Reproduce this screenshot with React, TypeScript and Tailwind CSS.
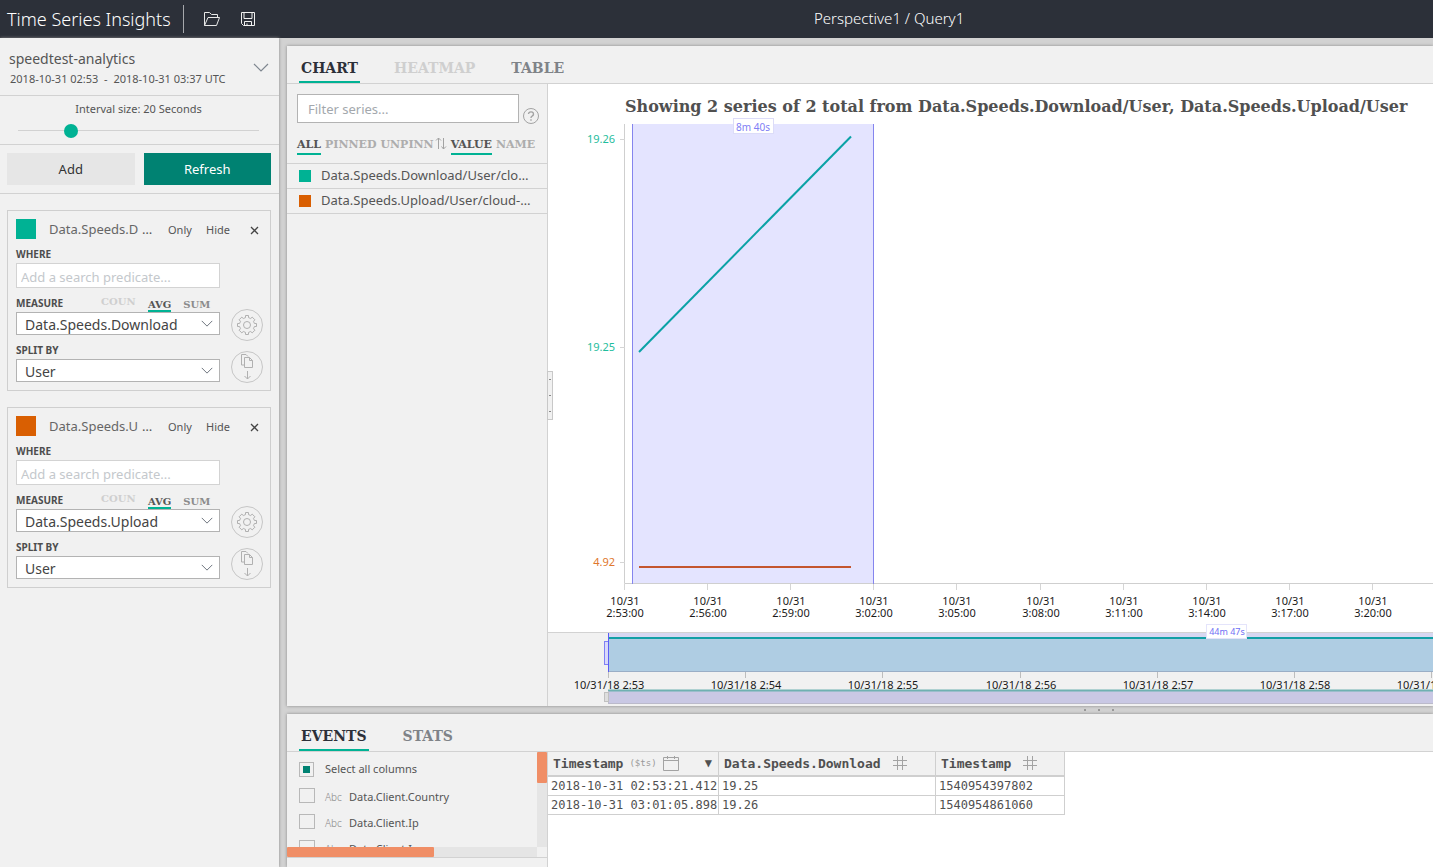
import React from "react";

const SANS = "font-['Noto_Sans',sans-serif]";
const SERIF = "font-['DejaVu_Serif',serif]";
const MONO = "font-['DejaVu_Sans_Mono',monospace]";

const yTicks = [
  { y: 15, label: "19.26", color: "#1fbd9d" },
  { y: 223, label: "19.25", color: "#1fbd9d" },
  { y: 438, label: "4.92", color: "#e0772d" },
];
const xTicks = ["2:53:00", "2:56:00", "2:59:00", "3:02:00", "3:05:00", "3:08:00", "3:11:00", "3:14:00", "3:17:00", "3:20:00"];
const brushTicks = ["2:53", "2:54", "2:55", "2:56", "2:57", "2:58", "2:59"];

function Chevron({ className }: { className: string }) {
  return (
    <svg className={className} viewBox="0 0 16 9" fill="none" stroke="currentColor" strokeWidth="1.2" aria-hidden="true">
      <path d="M1 1l7 7 7-7" />
    </svg>
  );
}

function Header() {
  return (
    <header className="flex h-[38px] shrink-0 items-center bg-[#2c3039] pb-px text-white">
      <h1 className="w-[176px] whitespace-nowrap pl-[7px] text-lg font-light">Time Series Insights</h1>
      <div className="ml-[7px] h-7 w-px bg-[#a6a8ac]" />
      <button aria-label="Open" className="ml-5">
        <svg width="17" height="16" viewBox="0 0 17 16" fill="none" stroke="#e8e8e8" aria-hidden="true">
          <path d="M.5 14.500V1.500H5.500L7.500 3.500H13.500V6.500M.5 14.500L4 6.500H15.500L12.500 14.500Z" />
        </svg>
      </button>
      <button aria-label="Save" className="ml-5">
        <svg width="15" height="16" viewBox="0 0 15 16" fill="none" stroke="#f1f1f1" aria-hidden="true">
          <path d="M.5 1.500H13.500V14.500H2.500L.5 12.500ZM3 1.500V7.500H11V1.500M3.500 14.500V10.500H10.500V14.500M6 14.500V12.500" />
        </svg>
      </button>
      <p className="ml-[558px] whitespace-nowrap text-[15px] font-light">Perspective1 / Query1</p>
    </header>
  );
}

function SelectBox({ id, value }: { id: string; value: string }) {
  return (
    <div className="relative h-[23px]">
      <select
        id={id}
        defaultValue={value}
        className="block h-full w-full appearance-none border border-[#b3b3b3] bg-white pl-2 pt-[2px] text-sm leading-5 text-[#444]"
      >
        <option>{value}</option>
      </select>
      <Chevron className="pointer-events-none absolute right-[7px] top-2 h-[7px] w-3 text-[#5f6670]" />
    </div>
  );
}

function GearIcon() {
  return (
    <svg width="20" height="20" viewBox="0 0 20 20" fill="none" stroke="#b0b0b0" aria-hidden="true">
      <path d="M8.500 2.600V.5H11.500V2.600L13.700 3.500L15.200 2.100L17.900 4.800L16.500 6.300L17.400 8.500H19.500V11.500H17.400L16.500 13.700L17.900 15.200L15.200 17.900L13.700 16.500L11.500 17.400V19.500H8.500V17.400L6.300 16.500L4.800 17.900L2.100 15.200L3.500 13.700L2.600 11.500H.5V8.500H2.600L3.500 6.300L2.100 4.800L4.800 2.100L6.300 3.500Z" />
      <circle cx="10" cy="10" r="3.500" />
    </svg>
  );
}

function CopyDownIcon() {
  return (
    <svg width="14" height="26" viewBox="0 0 14 26" fill="none" stroke="#b0b0b0" aria-hidden="true">
      <path d="M4.500 11H1.500V.5H6L8 2.500M4.500 3.500H9.500L12.500 6.500V13.500H4.500ZM9.500 3.500V6.500H12.500M7.500 17V25M4.500 22L7.500 25L10.500 22" />
    </svg>
  );
}

function TermCard({ id, title, color, measure }: { id: string; title: string; color: string; measure: string }) {
  const label = "flex h-6 items-end text-[10px] font-bold leading-[18px] text-[#4d4d4d]";
  return (
    <section className="border border-[#cfcfcf] p-2 pb-[7px] pr-[7px]">
      <div className="-mb-[2px] flex h-[22px] items-center text-[11px] text-[#555]">
        <span className={`h-5 w-5 self-start ${color}`} />
        <h2 className="ml-[13px] w-[93px] whitespace-pre text-[13px] text-[#666]">{title}</h2>
        <span className="w-[26px] text-[13px]">…</span>
        <button className="w-[38px] text-left">Only</button>
        <button className="w-11 text-left">Hide</button>
        <button aria-label="Remove">
          <svg width="9" height="9" viewBox="0 0 9 9" stroke="#444" strokeWidth="1.300" aria-hidden="true">
            <path d="M1 1l7 7M8 1l-7 7" />
          </svg>
        </button>
      </div>
      <div className="flex items-end justify-between">
        <div className="mb-px w-[204px]">
          <label htmlFor={`${id}-where`} className={label}>WHERE</label>
          <input
            id={`${id}-where`}
            placeholder="Add a search predicate..."
            className="block h-[25px] w-full border border-[#d3d3d3] bg-white px-1 pt-[2px] text-[13px] placeholder:text-[#c4c8cc]"
          />
          <div className={label}>
            <label htmlFor={`${id}-measure`} className="w-[85px]">MEASURE</label>
            <div className={`flex h-6 items-end text-[10px] ${SERIF}`}>
              <button className="h-[22px] w-[47px] text-left font-bold leading-6 text-[#cfcfcf]">COUN</button>
              <button className="h-[17px] border-b-2 border-[#00b294] font-bold leading-[20px] text-[#555]">AVG</button>
              <button className="ml-3 h-[17px] border-b-2 border-transparent font-bold leading-[20px] text-[#8c8c8c]">SUM</button>
            </div>
          </div>
          <SelectBox id={`${id}-measure`} value={measure} />
          <label htmlFor={`${id}-split`} className={label}>SPLIT BY</label>
          <SelectBox id={`${id}-split`} value="User" />
        </div>
        <div className="flex flex-col gap-[10px]">
          <button aria-label="Settings" className="flex h-8 w-8 items-center justify-center rounded-full border border-[#c6c6c6]">
            <GearIcon />
          </button>
          <button aria-label="Duplicate" className="flex h-8 w-8 items-center justify-center rounded-full border border-[#c6c6c6]">
            <CopyDownIcon />
          </button>
        </div>
      </div>
    </section>
  );
}

function Sidebar() {
  return (
    <aside className="w-[279px] shrink-0 bg-[#f1f1f1] shadow-[0_0_3px_#888]">
      <button className="flex h-[58px] w-full items-center border-b border-[#d2d2d2] pl-[9px] pr-[10px] text-left text-[#555]">
        <span className="flex-1 pt-1">
          <span className="block text-sm leading-5">speedtest-analytics</span>
          <span className="block whitespace-pre pl-px text-[11px] leading-5">2018-10-31 02:53  -  2018-10-31 03:37 UTC</span>
        </span>
        <Chevron className="mt-[2px] h-[9px] w-4 text-[#7f8790]" />
      </button>
      <div className="flex h-[49px] flex-col border-b border-[#d2d2d2] pl-[18px] pr-5 pt-1">
        <label htmlFor="interval" className="text-center text-[11px] leading-[18px] text-[#555]">Interval size: 20 Seconds</label>
        <input
          id="interval"
          type="range"
          min="0"
          max="1000"
          defaultValue="204"
          className="mt-1 h-4 w-full appearance-none bg-transparent [&::-webkit-slider-runnable-track]:h-px [&::-webkit-slider-runnable-track]:bg-[#d2d2d2] [&::-webkit-slider-thumb]:-mt-[6px] [&::-webkit-slider-thumb]:h-[14px] [&::-webkit-slider-thumb]:w-[14px] [&::-webkit-slider-thumb]:appearance-none [&::-webkit-slider-thumb]:rounded-full [&::-webkit-slider-thumb]:bg-[#00b294]"
        />
      </div>
      <div className="flex h-[49px] gap-[9px] border-b border-[#d2d2d2] py-2 pl-[7px] pr-2 text-[13px]">
        <button className="flex-1 bg-[#e6e6e6] pt-[2px] text-[#333]">Add</button>
        <button className="flex-1 bg-[#008272] pt-[2px] text-white">Refresh</button>
      </div>
      <div className="flex flex-col gap-4 pl-[7px] pr-2 pt-4">
        <TermCard id="download" title="Data.Speeds.D" color="bg-[#00b294]" measure="Data.Speeds.Download" />
        <TermCard id="upload" title="Data.Speeds.U" color="bg-[#d95f02]" measure="Data.Speeds.Upload" />
      </div>
    </aside>
  );
}

function SeriesList() {
  const off = "h-[22px] border-b-2 border-transparent pt-1 font-bold text-[#adadad]";
  const on = "h-[22px] border-b-2 border-[#00b294] pt-1 font-bold text-[#555]";
  return (
    <div className="w-[261px] shrink-0 border-r border-[#d2d2d2] text-[#555]">
      <div className="flex items-end gap-1 pl-[10px] pt-[10px]">
        <input
          aria-label="Filter series"
          placeholder="Filter series..."
          className="mb-px h-[29px] w-[222px] border border-[#b3b3b3] bg-white px-[10px] text-[13px] placeholder:text-[#a3a8ad]"
        />
        <button aria-label="Help" className="h-4 w-4">
          <svg width="16" height="16" viewBox="0 0 16 16" fill="none" stroke="#a3a3a3" aria-hidden="true">
            <circle cx="8" cy="8" r="7.500" />
            <path d="M5.500 6a2.500 2.200 0 1 1 3.700 2Q8 8.700 8 10M8 11.300v1.400" strokeWidth="1.400" />
          </svg>
        </button>
      </div>
      <div className={`flex h-[39px] items-center pl-[10px] text-[11px] ${SERIF}`}>
        <button className={on}>ALL</button>
        <button className={`ml-1 ${off}`}>PINNED</button>
        <button className={`ml-1 ${off}`}>UNPINN</button>
        <svg className="shrink-0" width="14" height="13" viewBox="0 0 14 13" fill="none" stroke="#a3a3a3" aria-hidden="true">
          <path d="M4.500 12V1M2 3.500L4.500 1L7 3.500M9.500 1V12M7.500 9.500L9.500 12L12 9.500" />
        </svg>
        <button className={`ml-[3px] ${on}`}>VALUE</button>
        <button className={`ml-1 ${off}`}>NAME</button>
      </div>
      <ul className="border-t border-[#d2d2d2] text-[13px]">
        <li className="flex h-[25px] items-center border-b border-[#d2d2d2] pl-3">
          <span className="mr-[10px] h-3 w-3 bg-[#00b294]" />
          Data.Speeds.Download/User/clo…
        </li>
        <li className="flex h-[25px] items-center border-b border-[#d2d2d2] pl-3">
          <span className="mr-[10px] h-3 w-3 bg-[#d95f02]" />
          Data.Speeds.Upload/User/cloud-…
        </li>
      </ul>
    </div>
  );
}

function MainChart() {
  return (
    <svg className="block w-full flex-1 overflow-visible text-[11px]" aria-label="Series chart">
      <rect x="84" y="0" width="242" height="460" fill="#e4e4ff" />
      <path d="M76.500 0V459.500H1200" fill="none" stroke="#cfcfcf" />
      <path d="M84.500 0V460M325.500 0V460" stroke="#8585ee" />
      <path d="M91 228L303 12.500" stroke="#0aa2a6" strokeWidth="2" />
      <path d="M91 443H303" stroke="#c4562f" strokeWidth="2" />
      {yTicks.map((t) => (
        <g key={t.label}>
          <path d={`M72 ${t.y + 0.5}H77`} stroke="#d5d5d5" />
          <text x="67" y={t.y + 4} textAnchor="end" fill={t.color}>{t.label}</text>
        </g>
      ))}
      {xTicks.map((t, i) => {
        const x = Math.round(77 + i * 83.1);
        return (
          <g key={t} fill="#1a1a1a">
            <path d={`M${x - 0.5} 460V466`} stroke="#d5d5d5" />
            <text y="481" textAnchor="middle">
              <tspan x={x}>10/31</tspan>
              <tspan x={x} dy="12">{t}</tspan>
            </text>
          </g>
        );
      })}
      <rect x="185.500" y="-5.500" width="40" height="15" fill="#fff" stroke="#dcdcf8" />
      <text x="205" y="7" textAnchor="middle" fill="#8080f5" fontSize="10">8m 40s</text>
    </svg>
  );
}

function BrushChart() {
  return (
    <svg className="block h-[73px] w-full shrink-0 overflow-visible bg-[#f1f1f1] text-[11px]" aria-label="Time range">
      <rect x="60" y="0" width="100%" height="5" fill="#d7d7f1" />
      <rect x="60" y="5" width="100%" height="34" fill="#afcde3" />
      <path d="M60 5H1200" stroke="#129fa6" strokeWidth="2" />
      <path d="M60 38.500H1200" stroke="#9aaec6" />
      <rect x="56.500" y="8.500" width="4" height="23" fill="#d9d9fa" stroke="#8080f5" />
      <path d="M60.500 0V39" stroke="#5c5cf5" />
      {brushTicks.map((t, i) => {
        const x = Math.round(60 + i * 137.2);
        return (
          <g key={t}>
            <path d={`M${x + 0.5} 39V45`} stroke="#bdbdbd" />
            <text x={x + 1} y="56" textAnchor="middle" fill="#1a1a1a">10/31/18 {t}</text>
          </g>
        );
      })}
      <rect x="60" y="57" width="100%" height="14" fill="#c9c8e4" />
      <path d="M60 57.500H1200" stroke="#6fb1b1" strokeWidth="2" />
      <path d="M60 70.500H1200M60.500 58V71" stroke="#bbbacb" />
      <rect x="56.500" y="59.500" width="4" height="9" fill="#dedede" stroke="#c0c0c0" />
      <rect x="658.500" y="-8.500" width="40" height="14" fill="#fff" stroke="#e4e4fb" />
      <text x="679" y="2" textAnchor="middle" fill="#7070f5" fontSize="9">44m 47s</text>
    </svg>
  );
}

function ChartPanel() {
  return (
    <section className="flex flex-1 flex-col overflow-hidden bg-[#f1f1f1] shadow-[0_0_3px_#888]">
      <nav className={`flex h-[38px] shrink-0 items-end border-b border-[#d2d2d2] pl-3 text-sm ${SERIF}`}>
        <button className="h-[30px] border-b-2 border-[#00b294] px-[2px] pt-[2px] font-bold text-[#2c3039]">CHART</button>
        <button className="ml-8 h-[30px] border-b-2 border-transparent px-[2px] pt-[2px] font-bold text-[#cfcfcf]">HEATMAP</button>
        <button className="ml-8 h-[30px] border-b-2 border-transparent px-[2px] pt-[2px] font-bold text-[#7f8388]">TABLE</button>
      </nav>
      <div className="flex min-h-0 flex-1">
        <SeriesList />
        <div className="relative flex min-w-0 flex-1 flex-col bg-white">
          <button
            aria-label="Resize series list"
            className="absolute -left-px top-[287px] flex h-[49px] w-[6px] flex-col items-center justify-around border border-[#c8c8c8] bg-[#f1f1f1]"
          >
            <span className="h-px w-[2px] bg-[#888]" />
            <span className="h-px w-[2px] bg-[#888]" />
            <span className="h-px w-[2px] bg-[#888]" />
          </button>
          <h2 className={`h-10 shrink-0 whitespace-nowrap pl-[77px] text-base font-bold leading-[46px] text-[#505050] ${SERIF}`}>
            Showing 2 series of 2 total from Data.Speeds.Download/User, Data.Speeds.Upload/User
          </h2>
          <MainChart />
          <div className="h-px shrink-0 bg-[#d2d2d2]" />
          <BrushChart />
        </div>
      </div>
    </section>
  );
}

function ColumnPicker() {
  const box = "shrink-0 appearance-none border border-[#b8b8b8]";
  return (
    <div className="w-[261px] shrink-0 border-r border-[#d2d2d2] text-[11px] text-[#555]">
      <div className="flex h-[95px]">
        <div className="flex-1 overflow-hidden pl-3 pt-1">
          <label className="mb-[2px] flex h-[26px] items-center gap-[11px]">
            <input type="checkbox" defaultChecked className={`${box} h-[15px] w-[15px] p-[3px] checked:bg-[#008272] checked:bg-clip-content`} />
            Select all columns
          </label>
          {["Data.Client.Country", "Data.Client.Ip", "Data.Client.Isp"].map((name) => (
            <label key={name} className="flex h-[26px] items-center">
              <input type="checkbox" className={`${box} mb-1 h-[15px] w-4`} />
              <span className="ml-[10px] w-6 text-[10px] font-light text-[#888]">Abc</span>
              {name}
            </label>
          ))}
        </div>
        <div className="w-[10px] bg-[#e5e5e5]">
          <div className="h-[31px] rounded-[1px] bg-[#f08e66]" />
        </div>
      </div>
      <div className="mr-[10px] h-[10px] bg-[#e5e5e5]">
        <div className="h-[10px] w-[147px] rounded-[1px] bg-[#f08e66]" />
      </div>
      <div className="h-px bg-[#d2d2d2]" />
    </div>
  );
}

function HashIcon() {
  return (
    <svg className="ml-3" width="14" height="14" viewBox="0 0 14 14" stroke="#a3a3a3" aria-hidden="true">
      <path d="M4.500 0V14M9.500 0V14M0 4.500H14M0 9.500H14" />
    </svg>
  );
}

function EventsTable() {
  const th = "h-[25px] border-b-2 border-r border-[#cfcfcf] bg-[#f1f1f1] p-0 pl-[5px]";
  const td = "h-[19px] whitespace-nowrap border-b border-r border-[#cfcfcf] p-0 pl-[3px] leading-[18px]";
  return (
    <div className={`min-w-0 flex-1 bg-white text-[#505050] ${MONO}`}>
      <table className="w-[517px] table-fixed border-separate border-spacing-0 text-left text-xs">
        <colgroup>
          <col className="w-[171px]" />
          <col className="w-[217px]" />
          <col className="w-[129px]" />
        </colgroup>
        <thead>
          <tr className="text-[13px]">
            <th className={th}>
              <div className="flex items-center">
                Timestamp
                <span className="ml-[6px] text-[9px] font-normal text-[#999]">($ts)</span>
                <svg className="ml-[6px] shrink-0" width="16" height="15" viewBox="0 0 16 15" fill="none" stroke="#a3a3a3" aria-hidden="true">
                  <path d="M.5 1.500H15.500V14.500H.5ZM.5 4.500H15.500M4.500 0V3M11.500 0V3" />
                </svg>
                <span className="ml-auto pr-[6px] text-xs">▼</span>
              </div>
            </th>
            <th className={th}>
              <div className="flex items-center">Data.Speeds.Download<HashIcon /></div>
            </th>
            <th className={th}>
              <div className="flex items-center">Timestamp<HashIcon /></div>
            </th>
          </tr>
        </thead>
        <tbody>
          <tr>
            <td className={td}>2018-10-31 02:53:21.412</td>
            <td className={td}>19.25</td>
            <td className={td}>1540954397802</td>
          </tr>
          <tr>
            <td className={td}>2018-10-31 03:01:05.898</td>
            <td className={td}>19.26</td>
            <td className={td}>1540954861060</td>
          </tr>
        </tbody>
      </table>
    </div>
  );
}

function EventsPanel() {
  return (
    <section className="flex h-[153px] shrink-0 flex-col bg-[#f1f1f1] shadow-[0_0_3px_#888]">
      <nav className={`flex h-[38px] shrink-0 items-end border-b border-[#d2d2d2] pl-3 text-sm ${SERIF}`}>
        <button className="h-[30px] border-b-2 border-[#00b294] px-[2px] pt-[2px] font-bold text-[#2c3039]">EVENTS</button>
        <button className="ml-8 h-[30px] border-b-2 border-transparent px-[2px] pt-[2px] font-bold text-[#7f8388]">STATS</button>
      </nav>
      <div className="flex flex-1">
        <ColumnPicker />
        <EventsTable />
      </div>
    </section>
  );
}

export default function App() {
  return (
    <div className={`flex min-h-screen flex-col overflow-hidden bg-[#d2d2d2] ${SANS}`}>
      <Header />
      <div className="flex min-h-0 flex-1 gap-2">
        <Sidebar />
        <main className="flex min-w-0 flex-1 flex-col pt-2">
          <ChartPanel />
          <div className="flex h-2 shrink-0 items-center gap-3 pl-[797px]">
            <span className="h-[2px] w-[2px] bg-[#999]" />
            <span className="h-[2px] w-[2px] bg-[#999]" />
            <span className="h-[2px] w-[2px] bg-[#999]" />
          </div>
          <EventsPanel />
        </main>
      </div>
    </div>
  );
}
